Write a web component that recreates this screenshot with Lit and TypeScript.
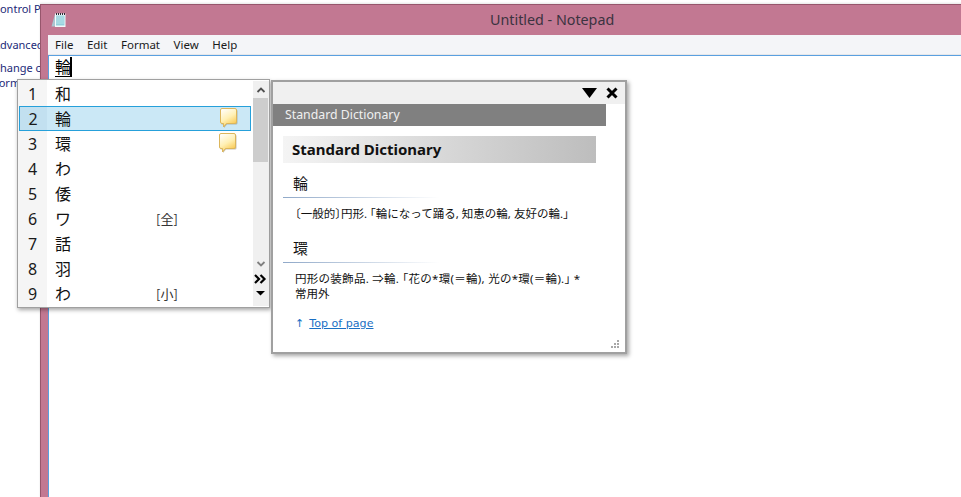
import { LitElement, html, css, svg } from "lit";
import { customElement } from "lit/decorators.js";

const CJK = css`"Noto Sans CJK JP", sans-serif`;

const rows: { n: number; t: string; tag?: string; note?: boolean; sel?: boolean }[] = [
  { n: 1, t: "和" },
  { n: 2, t: "輪", note: true, sel: true },
  { n: 3, t: "環", note: true },
  { n: 4, t: "わ" },
  { n: 5, t: "倭" },
  { n: 6, t: "ワ", tag: "[全]" },
  { n: 7, t: "話" },
  { n: 8, t: "羽" },
  { n: 9, t: "わ", tag: "[小]" },
];

const noteIcon = (id: string) => html`<svg class="note" width="18" height="21" viewBox="0 0 18 21">
  <defs><linearGradient id=${id} x1="0.1" y1="0" x2="0.6" y2="1">
    <stop offset="0" stop-color="#ffffff"/><stop offset="0.55" stop-color="#fff0b4"/><stop offset="1" stop-color="#f9c850"/>
  </linearGradient></defs>
  <path d="M2.5 1.5H16Q17.5 1.5 17.5 3V15Q17.5 16.5 16 16.5H7L4 20V16.5H2.5Q1 16.5 1 15V3Q1 1.5 2.5 1.5Z" fill="#8f8468" opacity=".5"/>
  <path d="M2 .5H15Q16.5 .5 16.5 2V14Q16.5 15.5 15 15.5H6.5L3.5 19V15.5H2Q.5 15.5 .5 14V2Q.5 .5 2 .5Z" fill="url(#${id})" stroke="#dcb65c" stroke-width="1"/>
</svg>`;

@customElement("app-root")
export class AppRoot extends LitElement {
  static styles = css`
    :host { display: block; position: relative; width: 961px; height: 497px; overflow: hidden; background: #fff; font-family: "Noto Sans", sans-serif; }
    .behind { position: absolute; left: -7px; top: 0; width: 120px; height: 100px; color: #1c2a78; font: 11px/16px "Noto Sans", sans-serif; white-space: nowrap; display: flex; flex-direction: column; }
    .b1 { margin-top: 1px; }
    .b2 { margin-top: 20px; }
    .b3 { margin-top: 7px; }
    .b4 { margin-top: -1px; }
    .window { position: absolute; left: 40px; top: 4px; width: 940px; height: 510px; box-sizing: border-box; display: flex; flex-direction: column; background: #c27892; border: 1px solid #96566c; box-shadow: 0 -1px 2px rgba(0,0,0,.1); }
    .title { height: 30px; flex: none; display: flex; align-items: center; position: relative; }
    .title .cap { position: absolute; left: 449px; top: 4px; color: #3b3340; font-size: 14.3px; line-height: 22px; }
    .app-ico { margin-left: 10px; }
    .client { flex: 1; margin-left: 7px; display: flex; flex-direction: column; min-height: 0; }
    .menu { height: 19px; flex: none; background: #f4f5f8; border-bottom: 1px solid #e6e7ea; display: flex; align-items: center; padding-left: 7px; gap: 13.5px; font-size: 11.5px; color: #1a1a1a; }
    .edit { flex: 1; background: #fff; border-top: 1px solid #5aa0e0; border-left: 1px solid #5aa0e0; padding: 1px 0 0 6px; }
    .comp { display: inline-block; font: 16px/19px ${CJK}; color: #000; border-bottom: 1px solid #000; border-right: 2px solid #000; height: 19px; width: 15px; overflow: hidden; }

    .cand { position: absolute; left: 17px; top: 79px; width: 253px; height: 229px; box-sizing: border-box; background: #fff; border: 1px solid #a0a0a0; box-shadow: 1px 2px 4px rgba(0,0,0,.35); display: flex; }
    .list { width: 234px; flex: none; padding-top: 1px; background: linear-gradient(to right, #f5f5f5 29px, #fff 29px); }
    .row { height: 25px; display: flex; align-items: center; box-sizing: border-box; position: relative; }
    .num { width: 29px; text-align: center; font-size: 16px; color: #1a1a1a; flex: none; }
    .txt { font: 16px/25px ${CJK}; color: #111; width: 101px; padding-left: 8px; flex: none; }
    .tag { font: 13px/25px ${CJK}; color: #333; }
    .row.sel { background: linear-gradient(to right, #c2e0f0 28px, #cbe8f6 28px); outline: 1px solid #26a0da; outline-offset: -1px; margin-left: 1px; margin-right: 1px; }
    .row.sel .num { width: 28px; }
    .note { position: absolute; left: 201px; top: 2px; }
    .scroll { width: 16px; margin-left: 1px; height: 225px; margin-top: 1px; background: #f0f0f0; position: relative; }
    .thumb { position: absolute; left: 0; top: 17px; width: 15px; height: 64px; background: #cdcdcd; }
    .scroll svg { position: absolute; left: 0; }
    .s1 { top: 5px; }
    .s2 { top: 179px; }
    .s3 { top: 192px; }
    .s4 { top: 208px; }

    .dict { position: absolute; left: 271px; top: 80px; width: 356px; height: 274px; box-sizing: border-box; background: #fff; border: 2px solid #a0a0a0; box-shadow: 2px 2px 4px rgba(0,0,0,.35); display: flex; flex-direction: column; }
    .dhead { height: 22px; flex: none; background: #f0f0f0; display: flex; align-items: center; justify-content: flex-end; gap: 9px; padding-right: 7px; }
    .dbar { height: 22px; flex: none; width: 333px; background: #808080; color: #f0f0f0; font-size: 12.3px; line-height: 22px; padding-left: 12px; box-sizing: border-box; }
    .dbody { padding: 10px 0 0 10px; width: 313px; }
    .dtitle { height: 27px; background: linear-gradient(to right, #f4f4f4, #bdbdbd); font: bold 15px/27px "Noto Sans", sans-serif; color: #111; padding-left: 9px; }
    .word { margin-top: 8px; height: 27px; font: 15px/23px ${CJK}; color: #111; padding-left: 10px; box-sizing: border-box; border-bottom: 1px solid transparent; border-image: linear-gradient(to right, #8fa8c8, #fff 50%) 1; }
    .def { font: 11.5px/15px "Noto Sans", ${CJK}; font-feature-settings: "halt"; color: #111; padding: 8px 0 0 12px; }
    .wide { letter-spacing: .28px; }
    .gap { height: 7px; }
    .top { font: 11.1px/15px "DejaVu Sans", sans-serif; color: #1a6fc4; padding: 15px 0 0 12px; display: flex; gap: 5px; align-items: center; }
    .top a { color: #1a6fc4; text-decoration: underline; }
    .grip { position: absolute; right: 5px; bottom: 3px; }
  `;

  render() {
    return html`
      <div class="behind">
        <div class="b1">Control Panel</div>
        <div class="b2">Advanced</div>
        <div class="b3">Change c</div>
        <div class="b4">Form</div>
      </div>
      <div class="window">
        <div class="title">
          <svg class="app-ico" width="15" height="16" viewBox="0 0 15 16">
            <path d="M4 2L.5 14.5H8V2Z" fill="#a8d3dc" opacity=".85"/>
            <path d="M4 1.5H14.5V15H4Z" fill="#f4fafa"/>
            <path d="M5 3.5H13.5V13.5H5Z" fill="#93d0dc"/>
            ${[5, 7, 9, 11].map((y) => svg`<path d="M5 ${y}H13.5" stroke="#c4e8ee" stroke-width=".8"/>`)}
            ${[5.5, 7.5, 9.5, 11.5, 13.5].map((x) => svg`<path d="M${x} 1V3" stroke="#2b2b35" stroke-width="1"/>`)}
          </svg>
          <span class="cap">Untitled - Notepad</span>
        </div>
        <div class="client">
          <div class="menu"><span>File</span><span>Edit</span><span>Format</span><span>View</span><span>Help</span></div>
          <div class="edit"><span class="comp">輪</span></div>
        </div>
      </div>

      <div class="cand">
        <div class="list">
          ${rows.map((r) => html`<div class="row ${r.sel ? "sel" : ""}">
            <span class="num">${r.n}</span><span class="txt">${r.t}</span>
            ${r.tag ? html`<span class="tag">${r.tag}</span>` : ""}
            ${r.note ? noteIcon("n" + r.n) : ""}
          </div>`)}
        </div>
        <div class="scroll">
          <div class="thumb"></div>
          <svg class="s1" width="16" height="8" viewBox="0 0 16 8"><path d="M4.5 6L8 2.5L11.5 6" fill="none" stroke="#505050" stroke-width="1.8"/></svg>
          <svg class="s2" width="16" height="8" viewBox="0 0 16 8"><path d="M4.5 2L8 5.5L11.5 2" fill="none" stroke="#808080" stroke-width="1.8"/></svg>
          <svg class="s3" width="16" height="12" viewBox="0 0 16 12"><path d="M2 2L6 6L2 10M7.5 2L11.5 6L7.5 10" fill="none" stroke="#000" stroke-width="2.2"/></svg>
          <svg class="s4" width="16" height="8" viewBox="0 0 16 8"><path d="M3 2H12L7.5 6.5Z" fill="#000"/></svg>
        </div>
      </div>

      <div class="dict">
        <div class="dhead">
          <svg width="15" height="10" viewBox="0 0 15 10"><path d="M0 0H15L7.5 10Z" fill="#000"/></svg>
          <svg width="12" height="12" viewBox="0 0 12 12"><path d="M1.5 1.5L10.5 10.5M10.5 1.5L1.5 10.5" stroke="#000" stroke-width="3"/></svg>
        </div>
        <div class="dbar">Standard Dictionary</div>
        <div class="dbody">
          <div class="dtitle">Standard Dictionary</div>
          <div class="word">輪</div>
          <div class="def">〔一般的〕円形. 「輪になって踊る, 知恵の輪, 友好の輪.」</div>
          <div class="gap"></div>
          <div class="word">環</div>
          <div class="def"><span class="wide">円形の装飾品. ⇒輪. 「花の*環(＝輪), 光の*環(＝輪).」 *</span><br>常用外</div>
          <div class="top"><span>↑</span><a>Top of page</a></div>
        </div>
        <svg class="grip" width="10" height="10" viewBox="0 0 10 10" fill="#a8a8a8">
          <rect x="7" y="1" width="2" height="2"/><rect x="4" y="4" width="2" height="2"/><rect x="7" y="4" width="2" height="2"/>
          <rect x="1" y="7" width="2" height="2"/><rect x="4" y="7" width="2" height="2"/><rect x="7" y="7" width="2" height="2"/>
        </svg>
      </div>
    `;
  }
}
